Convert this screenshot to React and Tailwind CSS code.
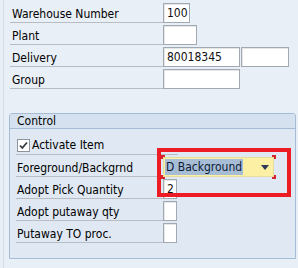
import React from "react";

const F = "font-['DejaVu_Sans',sans-serif] font-stretch-condensed";

function Input({ w, value, className = "" }) {
  return (
    <div
      className={`h-[20px] ${w} shrink-0 border border-[#a3a9b0] bg-white shadow-[inset_1px_1px_0_#e4e6e8] flex items-center pl-[3px] leading-[14px] text-[#111]` + " " + className}
    >
      {value}
    </div>
  );
}

function TopRow({ label, children }) {
  return (
    <div className="flex h-[22px] items-end">
      <div className="w-[153px] h-full shrink-0 border-b border-[#b9bdc3] flex items-end pl-[2px] pb-[1px] leading-[14px]">
        {label}
      </div>
      {children}
    </div>
  );
}

function BoxRow({ label, lineW = "w-[147px]", children }) {
  return (
    <div className="flex h-[22px] items-end">
      <div className={`${lineW} h-full shrink-0 border-b border-[#b9bdc3] flex items-end pl-[1px] pb-[1px] leading-[14px]`}>
        {label}
      </div>
      {children}
    </div>
  );
}

export default function App() {
  return (
    <div className={`${F} w-[298px] h-[268px] bg-[#e9eff6] relative overflow-hidden text-[12px] text-black`}>
      <div className="ml-[3px] h-full border-l border-[#d5dde7] pl-[6px] pt-[1px]">
        {/* top fields */}
        <TopRow label="Warehouse Number">
          <Input w="w-[27px]" value="100" />
        </TopRow>
        <TopRow label="Plant">
          <Input w="w-[34px]" value="" />
        </TopRow>
        <TopRow label="Delivery">
          <div className="flex gap-[1px]">
            <Input w="w-[77px]" value="80018345" />
            <Input w="w-[48px]" value="" />
          </div>
        </TopRow>
        <TopRow label="Group">
          <Input w="w-[77px]" value="" />
        </TopRow>

        {/* Control group box */}
        <div className="mt-[24px] -ml-[1px] w-[287px] border border-[#a5bcd6] rounded-t-[3px] bg-[#dfe8f3] pb-[15px]">
          <div className="h-[15px] border-b border-[#a5bcd6] bg-[#d5e1ee] rounded-t-[2px] pl-[7px] leading-[14px]">
            Control
          </div>
          <div className="pt-[4px] pl-[6px]">
            <BoxRow
              lineW="w-[162px]"
              label={
                <div className="flex items-center -ml-[0px] pb-[1px]">
                  <div className="w-[13px] h-[13px] border border-[#8d949c] bg-white flex items-center justify-center mr-[2px]">
                    <svg width="9" height="9" viewBox="0 0 9 9">
                      <path d="M1 4.5 L3.3 7 L8 1.5" fill="none" stroke="#333a44" strokeWidth="1.8" />
                    </svg>
                  </div>
                  <span>Activate Item</span>
                </div>
              }
            />
            <BoxRow label="Foreground/Backgrnd">
              <div className="relative h-[20px] w-[111px] shrink-0 bg-[#fbf0a3] border border-[#e6dc9c] flex items-center">
                <span className="ml-[1px] h-[16px] w-[78px] bg-[#a7bdd6] leading-[16px] pl-[1px] text-[#0c1a33]">
                  D Background
                </span>
                <svg className="absolute right-[4px] top-[7px]" width="8" height="5" viewBox="0 0 8 5">
                  <path d="M0 0 H8 L4 5 Z" fill="#2b3b55" />
                </svg>
              </div>
            </BoxRow>
            <BoxRow label="Adopt Pick Quantity">
              <Input w="w-[14px]" value="2" className="pl-[2px]" />
            </BoxRow>
            <BoxRow label="Adopt putaway qty">
              <Input w="w-[14px]" value="" />
            </BoxRow>
            <BoxRow label="Putaway TO proc.">
              <Input w="w-[14px]" value="" />
            </BoxRow>
          </div>
        </div>
      </div>

      {/* focus brackets around dropdown */}
      <div className="absolute left-[161px] top-[155px] w-[4px] h-[4px] border-l-2 border-t-2 border-[#d4252d]" />
      <div className="absolute left-[272px] top-[155px] w-[4px] h-[4px] border-r-2 border-t-2 border-[#d4252d]" />
      <div className="absolute left-[161px] top-[175px] w-[4px] h-[4px] border-l-2 border-b-2 border-[#d4252d]" />
      <div className="absolute left-[272px] top-[175px] w-[4px] h-[4px] border-r-2 border-b-2 border-[#d4252d]" />

      {/* red annotation rectangle */}
      <div className="absolute left-[157px] top-[148px] w-[134px] h-[49px] border-[4px] border-[#ed1c24]" />
    </div>
  );
}
